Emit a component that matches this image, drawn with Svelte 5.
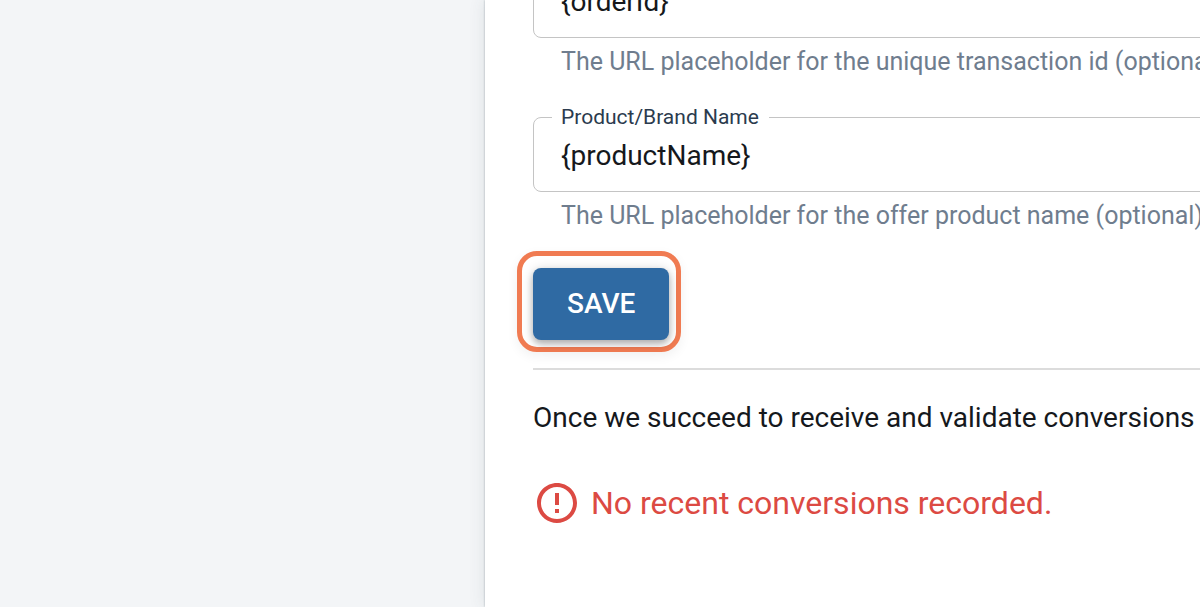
<script lang="ts">
  type Field = {
    id: string;
    label: string;
    value: string;
    hint: string;
  };

  let fields = $state<Field[]>([
    {
      id: "order-id",
      label: "Order ID",
      value: "{orderId}",
      hint: "The URL placeholder for the unique transaction id (optional)",
    },
    {
      id: "product-name",
      label: "Product/Brand Name",
      value: "{productName}",
      hint: "The URL placeholder for the offer product name (optional)",
    },
  ]);

  function save(event: SubmitEvent) {
    event.preventDefault();
  }
</script>

<div class="page">
  <aside></aside>
  <main>
    <form onsubmit={save}>
      {#each fields as field (field.id)}
        <div class="field">
          <fieldset>
            <legend><label for={field.id}>{field.label}</label></legend>
            <input
              id={field.id}
              type="text"
              aria-describedby="{field.id}-hint"
              bind:value={field.value}
            />
          </fieldset>
          <p class="hint" id="{field.id}-hint">{field.hint}</p>
        </div>
      {/each}
      <div class="highlight">
        <button type="submit">SAVE</button>
      </div>
    </form>
    <hr />
    <p class="note">Once we succeed to receive and validate conversions f</p>
    <div class="alert" role="status">
      <svg viewBox="0 0 24 24" aria-hidden="true">
        <path
          d="M11 15h2v2h-2zm0-8h2v6h-2zm.99-5C6.47 2 2 6.48 2 12s4.47 10 9.99 10C17.52 22 22 17.52 22 12S17.52 2 11.99 2zM12 20c-4.42 0-8-3.58-8-8s3.58-8 8-8 8 3.58 8 8-3.58 8-8 8z"
        />
      </svg>
      <span>No recent conversions recorded.</span>
    </div>
  </main>
</div>

<style>
  :global(body) {
    background: #f3f5f7;
    overflow: hidden;
  }
  .page {
    display: grid;
    grid-template-columns: 485px 1fr;
    height: 100vh;
    overflow: hidden;
    font-family: Roboto, "Liberation Sans", sans-serif;
    color: #15181c;
    white-space: nowrap;
  }
  main {
    min-width: 0;
    padding-left: 48px;
    background: #fff;
    box-shadow:
      0 0 2px rgba(60, 75, 85, 0.4),
      0 0 16px rgba(60, 75, 85, 0.12);
  }
  /* the form is scrolled so that the first field is partly out of view */
  form {
    margin-top: -49px;
  }
  .field {
    margin: 0 -48px 25px 0;
  }
  fieldset {
    min-width: 0;
    margin: 0;
    padding: 0 18px;
    border: 1px solid #c4c4c4;
    border-radius: 8px;
  }
  legend {
    padding: 0 10px 0 9px;
    font-size: 21px;
    line-height: 24px;
    color: #2b3b4e;
  }
  input {
    display: block;
    box-sizing: border-box;
    width: 100%;
    height: 62px;
    padding: 0 9px 10px;
    border: 0;
    outline: 0;
    background: none;
    font: inherit;
    font-size: 28px;
    color: inherit;
  }
  .hint {
    margin: 6px 0 0 28px;
    font-size: 25px;
    line-height: 36px;
    color: #6f7d8e;
  }
  .highlight {
    width: fit-content;
    margin: -8px 0 0 -16px;
    padding: 12px 7px 7px 11px;
    border: 5px solid #f07b52;
    border-radius: 20px;
    box-shadow: 0 4px 12px rgba(0, 0, 0, 0.06);
  }
  button {
    display: block;
    height: 72px;
    padding: 0 34px 2px;
    border: 0;
    border-radius: 8px;
    background: #2f6aa3;
    box-shadow:
      0 4px 6px rgba(0, 0, 0, 0.2),
      0 2px 12px rgba(0, 0, 0, 0.2);
    font: inherit;
    font-size: 28px;
    font-weight: 500;
    color: #fff;
    cursor: pointer;
  }
  hr {
    height: 2px;
    margin: 16px 0 0;
    border: 0;
    background: #dcdcdc;
  }
  .note {
    margin: 28px 0 0;
    font-size: 28px;
    line-height: 40px;
  }
  .alert {
    display: flex;
    align-items: center;
    gap: 10px;
    margin-top: 41px;
    font-size: 32px;
    line-height: 48px;
    color: #dc4a43;
  }
  .alert svg {
    width: 48px;
    height: 48px;
    fill: currentColor;
  }
</style>
